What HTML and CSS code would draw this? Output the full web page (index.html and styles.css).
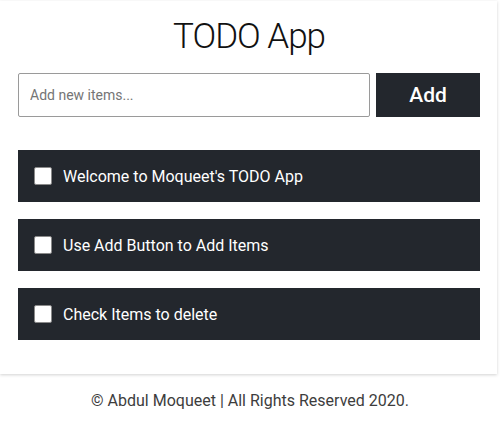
FILE: index.html
```html
<!DOCTYPE html>
<html lang="en">
<head>
<meta charset="utf-8">
<title>TODO App</title>
<link rel="stylesheet" href="styles.css">
</head>
<body>
<main class="card">
  <h1 class="title">TODO App</h1>
  <form class="add-form">
    <input class="add-input" type="text" placeholder="Add new items...">
    <button class="add-btn" type="button">Add</button>
  </form>
  <ul class="list">
    <li class="item"><input class="check" type="checkbox"><span class="label">Welcome to Moqueet's TODO App</span></li>
    <li class="item"><input class="check" type="checkbox"><span class="label">Use Add Button to Add Items</span></li>
    <li class="item"><input class="check" type="checkbox"><span class="label">Check Items to delete</span></li>
  </ul>
</main>
<footer class="footer">© Abdul Moqueet | All Rights Reserved 2020.</footer>
</body>
</html>
```
FILE: styles.css
```css
* { box-sizing: border-box; }
body {
  margin: 0;
  background: #fff;
  font-family: Roboto, "Liberation Sans", sans-serif;
  color: #212529;
}
.card {
  width: 497px;
  margin: 1px 0 0 0;
  padding: 15px 17px 34px 18px;
  background: #fff;
  box-shadow: 0 1px 3px rgba(0,0,0,0.18);
}
.title {
  margin: 0;
  font-size: 35px;
  font-weight: 300;
  letter-spacing: -1px;
  line-height: 42px;
  text-align: center;
  color: #111;
}
.add-form {
  display: flex;
  gap: 6px;
  margin-top: 15px;
}
.add-input {
  flex: 1;
  height: 44px;
  padding: 0 11px;
  border: 1px solid #9a9a9a;
  border-radius: 2px;
  font-family: inherit;
  font-size: 14px;
  color: #333;
  outline: none;
}
.add-input::placeholder { color: #757575; }
.add-btn {
  width: 104px;
  height: 44px;
  border: none;
  background: #23272d;
  color: #fff;
  font-family: inherit;
  font-size: 21px;
  font-weight: 500;
}
.list {
  list-style: none;
  margin: 33px 0 0;
  padding: 0;
  display: flex;
  flex-direction: column;
  gap: 17px;
}
.item {
  display: flex;
  align-items: center;
  height: 52px;
  padding-left: 16px;
  background: #23272d;
  color: #fff;
  font-size: 16px;
}
.check {
  appearance: none;
  -webkit-appearance: none;
  width: 18px;
  height: 18px;
  margin: 0 11px 0 0;
  background: #fff;
  border: 1px solid #8a8a8a;
  border-radius: 2px;
}
.footer {
  margin-top: 17px;
  text-align: center;
  font-size: 16px;
  color: #3d3d3d;
}
```
